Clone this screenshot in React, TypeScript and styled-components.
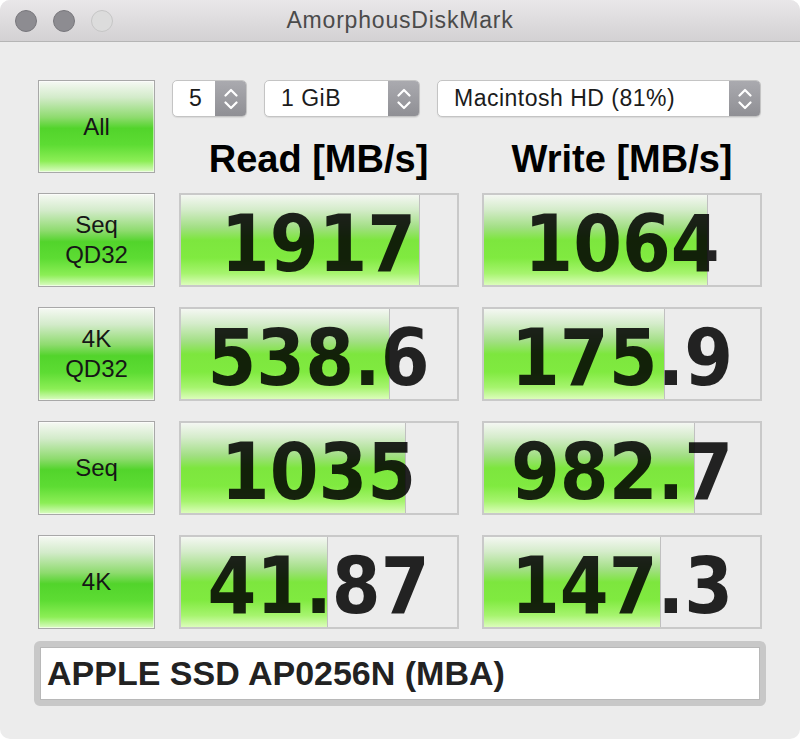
import React from 'react';
import styled, { createGlobalStyle } from 'styled-components';

interface Result {
  label: string[];
  read: string;
  readBar: number;
  write: string;
  writeBar: number;
}

// bar widths are in px of the 276px inner cell
const CELL_INNER = 276;

const results: Result[] = [
  { label: ['Seq', 'QD32'], read: '1917', readBar: 239, write: '1064', writeBar: 224 },
  { label: ['4K', 'QD32'], read: '538.6', readBar: 209, write: '175.9', writeBar: 181 },
  { label: ['Seq'], read: '1035', readBar: 225, write: '982.7', writeBar: 211 },
  { label: ['4K'], read: '41.87', readBar: 147, write: '147.3', writeBar: 177 },
];

const GlobalStyle = createGlobalStyle`
  html, body {
    margin: 0;
    padding: 0;
    background: #ffffff;
  }
  body {
    font-family: "Liberation Sans", Arial, sans-serif;
  }
`;

const Window = styled.div`
  width: 800px;
  height: 739px;
  background: #ececec;
  border-radius: 10px;
  overflow: hidden;
  display: flex;
  flex-direction: column;
`;

const TitleBar = styled.div`
  height: 41px;
  flex-shrink: 0;
  display: grid;
  grid-template-columns: 1fr auto 1fr;
  align-items: center;
  background: linear-gradient(to bottom, #e9e7e9, #d3d1d3);
  border-bottom: 1px solid #b5b5b5;
`;

const Lights = styled.div`
  display: flex;
  gap: 16px;
  padding-left: 15px;
`;

const Light = styled.span<{ $active: boolean }>`
  width: 22px;
  height: 22px;
  box-sizing: border-box;
  border-radius: 50%;
  background: ${p => (p.$active ? '#8d8c91' : '#dcdcdc')};
  border: 1px solid ${p => (p.$active ? '#78777c' : '#c5c5c5')};
`;

const Title = styled.div`
  font-size: 23px;
  letter-spacing: 0.8px;
  color: #4b4b4b;
  line-height: 41px;
`;

const Board = styled.div`
  display: grid;
  grid-template-columns: 117px 280px 280px;
  grid-template-rows: 93px repeat(4, 94px);
  column-gap: 23.5px;
  row-gap: 20px;
  padding: 38px 38px 0 38px;
`;

const TestButton = styled.div`
  box-sizing: border-box;
  display: flex;
  align-items: center;
  justify-content: center;
  flex-direction: column;
  text-align: center;
  font-size: 24px;
  line-height: 30px;
  color: #161616;
  border: 1px solid #a8a8a8;
  box-shadow: inset 0 0 0 1px rgba(255, 255, 255, 0.55);
  background: linear-gradient(
    to bottom,
    #f6f9f4 0%,
    #d3ebca 18%,
    #8edb6e 40%,
    #52d42b 52%,
    #5ddc33 70%,
    #8cee56 88%,
    #dcfcc4 100%
  );
`;

const Toolbar = styled.div`
  grid-column: 2 / 4;
  display: flex;
  flex-direction: column;
`;

const Selects = styled.div`
  display: flex;
  gap: 17px;
  margin-left: -6.5px;
`;

const Select = styled.div<{ $width: number }>`
  width: ${p => p.$width}px;
  height: 37px;
  box-sizing: border-box;
  display: flex;
  align-items: center;
  background: #ffffff;
  border: 1px solid #c4c4c4;
  border-radius: 5px;
  box-shadow: 0 1px 1px rgba(0, 0, 0, 0.08);
  overflow: hidden;
`;

const SelectText = styled.span`
  flex: 1;
  padding-left: 16px;
  font-size: 23px;
  letter-spacing: 0.5px;
  color: #1b1b1b;
  white-space: nowrap;
`;

const Stepper = styled.span`
  width: 31px;
  align-self: stretch;
  display: flex;
  align-items: center;
  justify-content: center;
  background: linear-gradient(to bottom, #aaaaaf, #8f8f94);
`;

const Headings = styled.div`
  display: grid;
  grid-template-columns: 280px 280px;
  column-gap: 23.5px;
  margin-top: 23px;
`;

const Heading = styled.div`
  text-align: center;
  font-size: 38px;
  line-height: 38px;
  font-weight: bold;
  color: #000000;
`;

const Cell = styled.div`
  box-sizing: border-box;
  display: grid;
  background: #ececec;
  border: 2px solid #c9c9c9;
`;

const Bar = styled.div`
  grid-area: 1 / 1;
  justify-self: start;
  box-sizing: border-box;
  border-right: 1px solid #c0c0c0;
  background: linear-gradient(
    to bottom,
    #f4f7f2 0%,
    #d5eccb 16%,
    #a2df84 36%,
    #7de63e 50%,
    #80ea40 70%,
    #a6f46e 87%,
    #dcfdbb 100%
  );
`;

const Value = styled.div`
  grid-area: 1 / 1;
  justify-self: center;
  align-self: start;
  padding-top: 8px;
  font-family: "DejaVu Sans Condensed", "DejaVu Sans", sans-serif;
  font-stretch: condensed;
  font-weight: bold;
  font-size: 78px;
  line-height: 82px;
  color: rgba(0, 0, 0, 0.86);
  white-space: nowrap;
`;

const DriveField = styled.div`
  margin: 12px 34px 0 34px;
  height: 65px;
  box-sizing: border-box;
  border: 6px solid #c8c8c8;
  border-radius: 6px;
  background: #ffffff;
  box-shadow: inset 0 0 0 1px #b8b8b8;
  padding-left: 7px;
  display: flex;
  align-items: center;
  font-size: 34px;
  font-weight: bold;
  color: #222222;
`;

const Chevrons = () => (
  <svg width="14" height="22" viewBox="0 0 14 22" fill="none">
    <path d="M1.5 7.5 L7 2 L12.5 7.5" stroke="#ffffff" strokeWidth="2.2" strokeLinecap="round" strokeLinejoin="round" />
    <path d="M1.5 14.5 L7 20 L12.5 14.5" stroke="#ffffff" strokeWidth="2.2" strokeLinecap="round" strokeLinejoin="round" />
  </svg>
);

const ResultCell: React.FC<{ value: string; bar: number }> = ({ value, bar }) => (
  <Cell>
    <Bar style={{ width: `${(bar / CELL_INNER) * 100}%` }} />
    <Value>{value}</Value>
  </Cell>
);

const App: React.FC = () => {
  const selects = [
    { text: '5', width: 75 },
    { text: '1 GiB', width: 156 },
    { text: 'Macintosh HD (81%)', width: 324 },
  ];

  return (
    <>
      <GlobalStyle />
      <Window>
        <TitleBar>
          <Lights>
            <Light $active />
            <Light $active />
            <Light $active={false} />
          </Lights>
          <Title>AmorphousDiskMark</Title>
          <span />
        </TitleBar>
        <Board>
          <TestButton>All</TestButton>
          <Toolbar>
            <Selects>
              {selects.map(s => (
                <Select key={s.text} $width={s.width}>
                  <SelectText>{s.text}</SelectText>
                  <Stepper>
                    <Chevrons />
                  </Stepper>
                </Select>
              ))}
            </Selects>
            <Headings>
              <Heading>Read [MB/s]</Heading>
              <Heading>Write [MB/s]</Heading>
            </Headings>
          </Toolbar>
          {results.map((r, i) => (
            <React.Fragment key={i}>
              <TestButton>
                {r.label.map(line => (
                  <span key={line}>{line}</span>
                ))}
              </TestButton>
              <ResultCell value={r.read} bar={r.readBar} />
              <ResultCell value={r.write} bar={r.writeBar} />
            </React.Fragment>
          ))}
        </Board>
        <DriveField>APPLE SSD AP0256N (MBA)</DriveField>
      </Window>
    </>
  );
};

export default App;
